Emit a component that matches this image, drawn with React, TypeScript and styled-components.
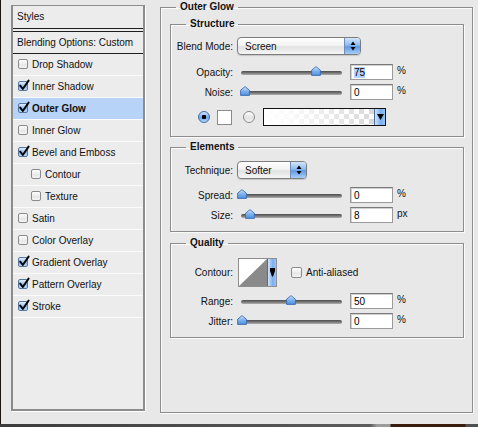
import React from 'react';
import styled, { createGlobalStyle } from 'styled-components';

const Global = createGlobalStyle`
  html, body { margin: 0; padding: 0; background: #e8e8e8; }
  body { font-family: "Liberation Sans", Arial, sans-serif; font-size: 10px; color: #111; }
  * { box-sizing: border-box; }
`;

const Window = styled.div`
  width: 478px;
  height: 427px;
  display: flex;
  flex-direction: column;
  background: #e8e8e8;
  overflow: hidden;
`;

const Main = styled.div`
  flex: 1;
  display: flex;
  align-items: flex-start;
  gap: 15px;
  padding-left: 10px;
  border-left: 1px solid #1b120c;
`;

const Footer = styled.div`
  height: 3px;
  background: linear-gradient(to right, #3c3c3c 0, #5c5c5c 370px, #9b9b9b 377px, #9b9b9b 390px, #3a1c0c 391px, #3a1c0c 465px, #4f4f4f 466px);
`;

/* ---------- left style list ---------- */

const StyleList = styled.div`
  margin-top: 5px;
  width: 134px;
  height: 406px;
  background: #ececec;
  border: 2px solid #8c8c8c;
  border-top-width: 1px;
  box-shadow: 1px 1px 0 #fff;
  display: flex;
  flex-direction: column;
`;

const ListHeader = styled.div`
  height: 26px;
  padding: 0 0 1px 4px;
  display: flex;
  align-items: center;
  border-bottom: 4px double #1e1e1e;
`;

const BlendRow = styled.div`
  height: 22px;
  padding-left: 4px;
  display: flex;
  align-items: center;
  border-bottom: 1px solid #1e1e1e;
`;

const StyleRow = styled.div<{ $selected?: boolean; $indent?: boolean }>`
  height: 22px;
  display: flex;
  align-items: center;
  gap: 4px;
  padding: 0 0 1px ${(p) => (p.$indent ? 18 : 5)}px;
  border-bottom: 1px solid #fbfbfb;
  background: ${(p) => (p.$selected ? '#b7d4f8' : 'transparent')};
  font-weight: ${(p) => (p.$selected ? 'bold' : 'normal')};
`;

const Box = styled.span<{ $checked?: boolean; $size?: number }>`
  position: relative;
  flex-shrink: 0;
  width: ${(p) => p.$size ?? 10}px;
  height: ${(p) => p.$size ?? 10}px;
  border-radius: 2px;
  border: 1px solid ${(p) => (p.$checked ? '#55779f' : '#8a8a8a')};
  background: ${(p) =>
    p.$checked
      ? 'linear-gradient(#e2eefc, #8fbbef 55%, #b9d6f6)'
      : 'linear-gradient(#ffffff, #e6e6e6 60%, #f4f4f4)'};
  display: block;
`;

const CheckMark = styled.svg`
  position: absolute;
  left: 0;
  top: -2px;
  overflow: visible;
`;

const Checkbox: React.FC<{ checked?: boolean; size?: number }> = ({ checked, size }) => (
  <Box $checked={checked} $size={size}>
    {checked && (
      <CheckMark width="10" height="10" viewBox="0 0 10 10">
        <path d="M1.2 5.6 L3.8 9 L9.6 0.6" fill="none" stroke="#000" strokeWidth="1.9" strokeLinecap="round" strokeLinejoin="round" />
      </CheckMark>
    )}
  </Box>
);

/* ---------- right groups ---------- */

const Group = styled.fieldset`
  margin: 0;
  min-width: 0;
  border: 1px solid #8d8d8d;
  box-shadow: 1px 1px 0 #fbfbfb, inset 1px 1px 0 #fbfbfb;
`;

const OuterGroup = styled(Group)`
  margin-top: 1px;
  width: 313px;
  height: 412px;
  padding: 5px 8px 0 9px;
  display: flex;
  flex-direction: column;
`;

const SubGroup = styled(Group)<{ $mt: number; $pt: number; $pb: number }>`
  width: 294px;
  margin-top: ${(p) => p.$mt}px;
  padding: ${(p) => p.$pt}px 0 ${(p) => p.$pb}px 0;
`;

const Legend = styled.legend<{ $ml: number }>`
  font-weight: bold;
  line-height: 12px;
  padding: 0 4px;
  margin-left: ${(p) => p.$ml}px;
  color: #111;
`;

const Row = styled.div<{ $h: number; $mt?: number }>`
  display: flex;
  align-items: center;
  height: ${(p) => p.$h}px;
  margin-top: ${(p) => p.$mt ?? 0}px;
`;

const Label = styled.span`
  width: 62px;
  flex-shrink: 0;
  text-align: right;
`;

const Spacer = styled.span<{ $w: number }>`
  display: block;
  flex-shrink: 0;
  width: ${(p) => p.$w}px;
`;

const Popup = styled.div<{ $w: number }>`
  width: ${(p) => p.$w}px;
  height: 18px;
  border: 1px solid #7c7c7c;
  border-radius: 4px;
  background: linear-gradient(#ffffff, #f3f3f3 45%, #e1e1e1 55%, #f6f6f6);
  display: flex;
  align-items: center;
  overflow: hidden;
  box-shadow: 0 1px 1px rgba(0, 0, 0, 0.15);
`;

const PopupText = styled.span`
  flex: 1;
  padding-left: 7px;
`;

const PopupArrows = styled.span`
  width: 16px;
  height: 100%;
  border-left: 1px solid #6d8fbf;
  background: linear-gradient(#d3e6fc, #8cbaf0 45%, #5f9ae6 55%, #a8cdf6);
  display: flex;
  align-items: center;
  justify-content: center;
`;

const Popup1: React.FC<{ w: number; text: string }> = ({ w, text }) => (
  <Popup $w={w}>
    <PopupText>{text}</PopupText>
    <PopupArrows>
      <svg width="6" height="10" viewBox="0 0 6 10">
        <path d="M3 0.5 L5.5 4 L0.5 4 Z" fill="#000" />
        <path d="M3 9.5 L5.5 6 L0.5 6 Z" fill="#000" />
      </svg>
    </PopupArrows>
  </Popup>
);

const SliderWrap = styled.div`
  position: relative;
  width: 101px;
  height: 12px;
  flex-shrink: 0;
`;

const Track = styled.div`
  position: absolute;
  left: 0;
  right: 0;
  top: 5px;
  height: 4px;
  border-radius: 2px;
  background: linear-gradient(#4c4c4c, #777 50%, #b0b0b0);
`;

const Thumb = styled.svg`
  position: absolute;
  top: 0;
`;

const Slider: React.FC<{ pos: number }> = ({ pos }) => (
  <SliderWrap>
    <Track />
    <Thumb width="10" height="10" viewBox="0 0 10 10" style={{ left: pos - 5 }}>
      <defs>
        <linearGradient id={`tg${pos}`} x1="0" y1="0" x2="0" y2="1">
          <stop offset="0" stopColor="#d6e8fd" />
          <stop offset="0.5" stopColor="#7fb2ef" />
          <stop offset="1" stopColor="#4d8fe0" />
        </linearGradient>
      </defs>
      <path d="M5 0.6 L9.4 4.2 L9.4 9.4 L0.6 9.4 L0.6 4.2 Z" fill={`url(#tg${pos})`} stroke="#3c6db0" strokeWidth="0.9" />
    </Thumb>
  </SliderWrap>
);

const NumField = styled.div`
  width: 43px;
  height: 16px;
  flex-shrink: 0;
  border: 1px solid #9a9a9a;
  border-top-color: #7a7a7a;
  box-shadow: inset 1px 1px 0 #d0d0d0;
  background: #fff;
  padding-left: 3px;
  display: flex;
  align-items: center;
  color: #000;
`;

const Selected = styled.span`
  background: #b4d4ff;
`;

const Unit = styled.span`
  align-self: flex-start;
  margin-left: 4px;
  margin-top: 1px;
  line-height: 11px;
`;

const Radio = styled.span<{ $on?: boolean }>`
  width: 12px;
  height: 12px;
  flex-shrink: 0;
  border-radius: 50%;
  border: 1px solid ${(p) => (p.$on ? '#3e6ca8' : '#8a8a8a')};
  background: ${(p) =>
    p.$on
      ? 'radial-gradient(circle at 50% 50%, #000 0 2px, transparent 2.5px), linear-gradient(#d2e6fd, #6fa7ec 55%, #b6d6f8)'
      : 'linear-gradient(#ffffff, #e2e2e2 60%, #f6f6f6)'};
`;

const Swatch = styled.span`
  width: 15px;
  height: 15px;
  flex-shrink: 0;
  border: 1px solid #8a8a8a;
  background: #fff;
`;

const GradientPicker = styled.div`
  display: flex;
  height: 18px;
  border: 1px solid #111;
`;

const GradientBar = styled.div`
  width: 110px;
  height: 100%;
  background:
    linear-gradient(to right, #ffffff 0%, rgba(255, 255, 255, 0.8) 30%, rgba(255, 255, 255, 0) 100%),
    repeating-conic-gradient(#d8d8d8 0 25%, #ffffff 0 50%) 0 0 / 10px 10px;
`;

const BlueDrop = styled.div<{ $w: number }>`
  width: ${(p) => p.$w}px;
  height: 100%;
  border-left: 1px solid #4d6f9f;
  background: linear-gradient(to right, #cfe4fc, #78aeef 60%, #9cc5f5);
  display: flex;
  align-items: center;
  justify-content: center;
`;

const ContourBox = styled.div`
  width: 39px;
  height: 29px;
  flex-shrink: 0;
  display: flex;
  border: 1px solid #8e8e8e;
  background: #fff;
`;

const ContourPreview = styled.svg`
  display: block;
`;

const CheckLabel = styled.span`
  margin-left: 4px;
`;

const styles: { name: string; checked?: boolean; selected?: boolean; indent?: boolean }[] = [
  { name: 'Drop Shadow' },
  { name: 'Inner Shadow', checked: true },
  { name: 'Outer Glow', checked: true, selected: true },
  { name: 'Inner Glow' },
  { name: 'Bevel and Emboss', checked: true },
  { name: 'Contour', indent: true },
  { name: 'Texture', indent: true },
  { name: 'Satin' },
  { name: 'Color Overlay' },
  { name: 'Gradient Overlay', checked: true },
  { name: 'Pattern Overlay', checked: true },
  { name: 'Stroke', checked: true },
];

const SliderRow: React.FC<{ label: string; pos: number; value: React.ReactNode; unit: string; mt?: number }> = ({
  label,
  pos,
  value,
  unit,
  mt,
}) => (
  <Row $h={16} $mt={mt}>
    <Label>{label}</Label>
    <Spacer $w={8} />
    <Slider pos={pos} />
    <Spacer $w={8} />
    <NumField>{value}</NumField>
    <Unit>{unit}</Unit>
  </Row>
);

export default function App() {
  return (
    <Window>
      <Global />
      <Main>
        <StyleList>
          <ListHeader>Styles</ListHeader>
          <BlendRow>Blending Options: Custom</BlendRow>
          {styles.map((s) => (
            <StyleRow key={s.name} $selected={s.selected} $indent={s.indent}>
              <Checkbox checked={s.checked} />
              <span>{s.name}</span>
            </StyleRow>
          ))}
        </StyleList>

        <OuterGroup>
          <Legend $ml={6}>Outer Glow</Legend>

          <SubGroup $mt={0} $pt={7} $pb={10}>
            <Legend $ml={15}>Structure</Legend>
            <Row $h={18}>
              <Label>Blend Mode:</Label>
              <Spacer $w={4} />
              <Popup1 w={124} text="Screen" />
            </Row>
            <SliderRow label="Opacity:" pos={75} value={<Selected>75</Selected>} unit="%" mt={9} />
            <SliderRow label="Noise:" pos={4} value="0" unit="%" mt={4} />
            <Row $h={18} $mt={8}>
              <Spacer $w={27} />
              <Radio $on />
              <Spacer $w={7} />
              <Swatch />
              <Spacer $w={11} />
              <Radio />
              <Spacer $w={8} />
              <GradientPicker>
                <GradientBar />
                <BlueDrop $w={11}>
                  <svg width="7" height="6" viewBox="0 0 7 6">
                    <path d="M0 0 L7 0 L3.5 6 Z" fill="#000" />
                  </svg>
                </BlueDrop>
              </GradientPicker>
            </Row>
          </SubGroup>

          <SubGroup $mt={4} $pt={8} $pb={8}>
            <Legend $ml={15}>Elements</Legend>
            <Row $h={18}>
              <Label>Technique:</Label>
              <Spacer $w={4} />
              <Popup1 w={70} text="Softer" />
            </Row>
            <SliderRow label="Spread:" pos={1} value="0" unit="%" mt={8} />
            <SliderRow label="Size:" pos={9} value="8" unit="px" mt={4} />
          </SubGroup>

          <SubGroup $mt={5} $pt={9} $pb={8}>
            <Legend $ml={15}>Quality</Legend>
            <Row $h={29}>
              <Label>Contour:</Label>
              <Spacer $w={5} />
              <ContourBox>
                <ContourPreview width="28" height="27" viewBox="0 0 28 27">
                  <path d="M0 27 L28 0 L28 27 Z" fill="#8a8a8a" />
                </ContourPreview>
                <BlueDrop $w={9}>
                  <svg width="5" height="9" viewBox="0 0 5 9">
                    <path d="M0 0 L5 0 L5 3 L3 8.5 L2 8.5 L0 3 Z" fill="#000" />
                  </svg>
                </BlueDrop>
              </ContourBox>
              <Spacer $w={14} />
              <Checkbox size={11} />
              <CheckLabel>Anti-aliased</CheckLabel>
            </Row>
            <SliderRow label="Range:" pos={50} value="50" unit="%" mt={6} />
            <SliderRow label="Jitter:" pos={1} value="0" unit="%" mt={4} />
          </SubGroup>
        </OuterGroup>
      </Main>
      <Footer />
    </Window>
  );
}
